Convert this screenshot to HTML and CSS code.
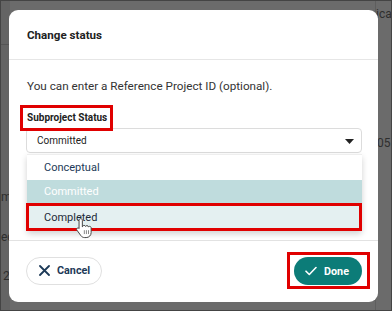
FILE: index.html
```html
<!DOCTYPE html>
<html>
<head>
<meta charset="utf-8">
<link rel="stylesheet" href="styles.css">
</head>
<body>
<div class="page">
  <div class="page-left">
    <span class="bg-line l1"></span>
    <span class="bg-text t-m">m</span>
    <span class="bg-text t-ec">ec</span>
    <span class="bg-text t-2">2</span>
  </div>
  <div class="page-right">
    <span class="bg-text t-ica">ica</span>
    <span class="bg-text t-05">05</span>
  </div>
</div>

<div class="modal">
  <div class="modal-header">Change status</div>
  <div class="modal-body">
    <p class="intro">You can enter a Reference Project ID (optional).</p>
    <div class="field">
      <span class="label hl">Subproject Status</span>
      <div class="select">
        <span>Committed</span>
        <svg class="caret" width="9" height="5" viewBox="0 0 9 5"><path d="M0 0H9L4.5 5Z" fill="#222"/></svg>
      </div>
      <ul class="menu">
        <li class="item">Conceptual</li>
        <li class="item selected">Committed</li>
        <li class="item hover">Completed</li>
      </ul>
      <svg class="cursor" width="18" height="22" viewBox="0 0 16 20">
        <path d="M5 1.5c.9 0 1.5.6 1.5 1.5v6l.2-.1c0-.8.6-1.3 1.4-1.3.7 0 1.2.4 1.3 1 .2-.5.7-.8 1.3-.8.7 0 1.3.5 1.3 1.2.2-.3.6-.5 1.1-.5.8 0 1.4.6 1.4 1.4v4.2c0 2.6-1.9 4.6-4.5 4.6H8.6c-1.5 0-2.5-.6-3.4-1.7L1.6 12c-.5-.6-.4-1.4.2-1.8.6-.4 1.3-.3 1.8.2L3.5 10V3c0-.9.6-1.5 1.5-1.5Z" fill="#fff" stroke="#444" stroke-width="0.9"/>
        <path d="M8.3 12v3.5M10.2 12v3.5M12.1 12v3.5" stroke="#666" stroke-width=".7"/>
      </svg>
    </div>
  </div>
  <div class="modal-footer">
    <button class="btn btn-cancel">
      <svg width="11" height="11" viewBox="0 0 11 11"><path d="M1 1L10 10M10 1L1 10" stroke="#1d3a58" stroke-width="1.8" stroke-linecap="round"/></svg>
      Cancel
    </button>
    <div class="done-wrap hl">
      <button class="btn btn-done">
        <svg width="12" height="10" viewBox="0 0 12 10"><path d="M1 5.2L4.3 8.5L11 1.5" stroke="#fff" stroke-width="1.6" fill="none" stroke-linecap="round" stroke-linejoin="round"/></svg>
        Done
      </button>
    </div>
  </div>
</div>
</body>
</html>
```

FILE: styles.css
```css
* { box-sizing: border-box; }
html, body { margin: 0; padding: 0; }
body {
  width: 392px;
  height: 311px;
  overflow: hidden;
  background: #6b6b6b;
  font-family: Roboto, "Liberation Sans", Arial, sans-serif;
  position: relative;
  border: 1px solid #444;
}
.page {
  display: flex;
  justify-content: space-between;
  height: 100%;
}
.page-left {
  width: 9px;
  background: #646464;
  display: flex;
  flex-direction: column;
  position: relative;
}
.page-right {
  width: 16px;
  display: flex;
  flex-direction: column;
  border-left: 1px solid #5e5e5e;
}
.bg-text {
  color: #2e2e2e;
  font-size: 12px;
  line-height: 14px;
  white-space: nowrap;
}
.bg-line { display: block; height: 1px; background: #555; margin-top: 43px; }
.t-m { margin-top: 145px; }
.t-ec { margin-top: 26px; }
.t-2 { margin-top: 25px; margin-left: 2px; }
.t-ica { margin-top: 6px; }
.t-05 { margin-top: 115px; margin-left: 1px; }

.modal {
  position: absolute;
  left: 8px;
  top: 9px;
  width: 369px;
  height: 292px;
  background: #fff;
  border-radius: 9px;
  display: flex;
  flex-direction: column;
}
.modal-header {
  height: 50px;
  padding: 0 18px;
  display: flex;
  align-items: center;
  font-weight: 700;
  font-size: 11.6px;
  color: #222;
  border-bottom: 1px solid #e6e6e6;
}
.modal-body {
  height: 181px;
  padding: 0 16px 0 17px;
  border-bottom: 1px solid #e2e2e2;
}
.intro {
  margin: 17px 0 0 1px;
  font-size: 11.7px;
  line-height: 18px;
  color: #333;
}
.field {
  position: relative;
  margin-top: 10px;
}
.label {
  display: inline-block;
  font-weight: 700;
  font-size: 10px;
  color: #222;
  line-height: 20px;
  padding: 0 3px 0 4px;
  margin-left: -6px;
}
.hl { border: 3px solid #e00000; }
.select {
  margin-top: -3px;
  height: 25px;
  border: 1px solid #dcdcdc;
  border-radius: 4px;
  display: flex;
  align-items: center;
  justify-content: space-between;
  padding: 0 7px 0 10px;
  font-size: 10px;
  color: #222;
}
.caret { margin-top: 1px; }
.menu {
  position: absolute;
  left: 1px;
  right: 0;
  top: 49px;
  margin: 0;
  padding: 0;
  list-style: none;
  background: #fff;
  box-shadow: 0 3px 6px rgba(0,0,0,0.18);
  border-radius: 0 0 3px 3px;
}
.item {
  display: flex;
  align-items: center;
  padding-left: 17px;
  font-size: 11px;
  color: #1d3a58;
}
.item:first-child { height: 26px; border-top: 1px solid #eee; }
.selected { height: 23px; background: #bfdcdd; color: #fff; }
.hover {
  height: 28px;
  background: #e4f0f1;
  color: #1d2a38;
  margin-left: -1px;
  padding-left: 15px;
}
.item.hover { border: 3px solid #e00000; }
.cursor {
  position: absolute;
  left: 49px;
  top: 112px;
}
.modal-footer {
  flex: 1;
  display: flex;
  align-items: center;
  justify-content: space-between;
  padding: 0 8px 2px 17px;
}
.btn {
  height: 28px;
  border-radius: 14px;
  font-family: inherit;
  font-weight: 700;
  font-size: 10.8px;
  display: flex;
  align-items: center;
  gap: 7px;
  cursor: pointer;
}
.btn-cancel {
  width: 76px;
  background: #fff;
  border: 1px solid #e0e0e0;
  color: #1d3a58;
  padding: 0 0 0 12px;
}
.done-wrap {
  padding: 2px 5px 0 4px;
  height: 37px;
}
.btn-done {
  width: 68px;
  background: #0c7c78;
  border: none;
  color: #fff;
  padding: 0 0 0 11px;
}
```
